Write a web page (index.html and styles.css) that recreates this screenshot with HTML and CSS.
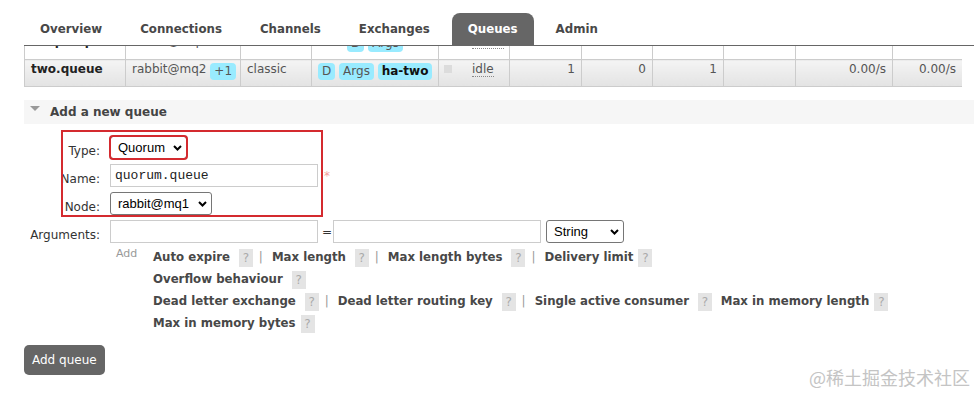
FILE: index.html
```html
<!DOCTYPE html>
<html lang="en">
<head>
<meta charset="utf-8">
<title>Queues</title>
<link rel="stylesheet" href="styles.css">
</head>
<body>
<nav class="tabs">
  <a class="tab">Overview</a>
  <a class="tab">Connections</a>
  <a class="tab">Channels</a>
  <a class="tab">Exchanges</a>
  <a class="tab active">Queues</a>
  <a class="tab">Admin</a>
</nav>

<main class="page">
  <div class="list-wrap">
    <table class="list">
      <colgroup>
        <col class="c1"><col class="c2"><col class="c3"><col class="c4"><col class="c5"><col class="c6">
        <col class="c7"><col class="c8"><col class="c9"><col class="c10"><col class="c11">
      </colgroup>
      <tbody>
        <tr class="r1">
          <td class="name">simple.queue</td>
          <td>rabbit@mq3</td>
          <td>classic</td>
          <td class="center"><abbr class="b">D</abbr> <abbr class="b">Args</abbr></td>
          <td class="state"><span class="sq red"></span><abbr class="st">down</abbr></td>
          <td class="num">NaN</td>
          <td class="num">NaN</td>
          <td class="num">NaN</td>
          <td></td>
          <td></td>
          <td></td>
        </tr>
        <tr class="r2">
          <td class="name">two.queue</td>
          <td>rabbit@mq2 <abbr class="b">+1</abbr></td>
          <td>classic</td>
          <td class="center"><abbr class="b">D</abbr> <abbr class="b">Args</abbr> <abbr class="b strong">ha-two</abbr></td>
          <td class="state"><span class="sq"></span><abbr class="st">idle</abbr></td>
          <td class="num">1</td>
          <td class="num">0</td>
          <td class="num">1</td>
          <td></td>
          <td class="num">0.00/s</td>
          <td class="num">0.00/s</td>
        </tr>
      </tbody>
    </table>
  </div>

  <h2 class="sec-title"><span class="tri"></span>Add a new queue</h2>

  <div class="form">
    <div class="grid">
      <label class="lbl">Type:</label>
      <div class="ctl">
        <span class="sel hl"><select class="w-type"><option>Quorum</option></select><svg class="chev" viewBox="0 0 9 6"><path d="M1 1 L4.5 4.5 L8 1" fill="none" stroke="#000" stroke-width="2"/></svg></span>
      </div>

      <label class="lbl">Name:</label>
      <div class="ctl">
        <input class="txt" type="text" value="quorum.queue"><span class="mand">*</span>
      </div>

      <label class="lbl">Node:</label>
      <div class="ctl">
        <span class="sel"><select class="w-node"><option>rabbit@mq1</option></select><svg class="chev" viewBox="0 0 9 6"><path d="M1 1 L4.5 4.5 L8 1" fill="none" stroke="#000" stroke-width="2"/></svg></span>
      </div>

      <label class="lbl">Arguments:</label>
      <div class="ctl">
        <input class="txt" type="text"><span class="eq">=</span><input class="txt" type="text">
        <span class="sel str"><select class="w-str"><option>String</option></select><svg class="chev" viewBox="0 0 9 6"><path d="M1 1 L4.5 4.5 L8 1" fill="none" stroke="#000" stroke-width="2"/></svg></span>
      </div>

      <div class="arg-help">
        <span class="add">Add</span>
        <div class="lines">
          <div class="ln"><a>Auto expire</a> <span class="q">?</span><span class="sep">|</span><a>Max length</a> <span class="q">?</span><span class="sep">|</span><a>Max length bytes</a> <span class="q">?</span><span class="sep">|</span><a>Delivery limit</a><span class="q">?</span></div>
          <div class="ln"><a>Overflow behaviour</a> <span class="q">?</span></div>
          <div class="ln"><a>Dead letter exchange</a> <span class="q">?</span><span class="sep">|</span><a>Dead letter routing key</a> <span class="q">?</span><span class="sep">|</span><a>Single active consumer</a> <span class="q">?</span> <a class="ml">Max in memory length</a><span class="q">?</span></div>
          <div class="ln"><a>Max in memory bytes</a><span class="q">?</span></div>
        </div>
      </div>
    </div>
    <div class="annot"></div>
  </div>

  <button class="btn" type="button">Add queue</button>
</main>

<div class="wm">@稀土掘金技术社区</div>
</body>
</html>
```

FILE: styles.css
```css
* { box-sizing: border-box; }

html, body {
  margin: 0;
  padding: 0;
  background: #fff;
}

body {
  position: relative;
  height: 394px;
  overflow: hidden;
  font-family: "DejaVu Sans", Verdana, sans-serif;
  font-size: 12px;
  color: #484848;
}

/* ---------- tabs ---------- */
.tabs {
  display: flex;
  gap: 6px;
  margin-left: 24px;
  padding-top: 13px;
  border-bottom: 1px solid #666;
}

.tab {
  height: 32px;
  line-height: 32px;
  padding: 0 16px;
  font-size: 11.8px;
  font-weight: bold;
  color: #484848;
  border-radius: 8px 8px 0 0;
}

.tab.active {
  background: #666;
  color: #fff;
}

/* ---------- page ---------- */
.page {
  padding-left: 24px;
}

.list-wrap {
  width: 938px;
  height: 41px;
  overflow: hidden;
}

.list {
  width: 938px;
  margin-top: -15px;
  border-collapse: collapse;
  table-layout: fixed;
}

.c1 { width: 101px; }
.c2 { width: 115px; }
.c3 { width: 71px; }
.c4 { width: 127px; }
.c5 { width: 71px; }
.c6 { width: 72px; }
.c7 { width: 71px; }
.c8 { width: 71px; }
.c9 { width: 72px; }
.c10 { width: 97px; }
.c11 { width: 70px; }

.list td {
  height: 27px;
  padding: 0 6px;
  border: 1px solid #ccc;
  line-height: 19px;
  vertical-align: top;
  white-space: nowrap;
  overflow: hidden;
  color: #555;
  background: #fff;
}

.list .r1 td {
  height: 28px;
}

.list .r2 td {
  background: linear-gradient(#f4f4f4, #e3e3e3);
}

.list td.name {
  font-weight: bold;
  color: #222;
}

.list td.center { text-align: center; }
.list td.num { text-align: right; }
.list td.state { padding-left: 5px; }

.b {
  display: inline-block;
  height: 17px;
  line-height: 17px;
  padding: 0 4px;
  border-radius: 4px;
  background: #99ebff;
  color: #555;
  vertical-align: -2px;
  text-decoration: none;
}

.b.strong {
  font-weight: bold;
  color: #111;
}

.sq {
  display: inline-block;
  width: 8px;
  height: 8px;
  margin-right: 20px;
  background: #dcdcdc;
}

.sq.red { background: #f07c7c; }

.st {
  text-decoration: none;
  border-bottom: 1px dotted #888;
  color: #555;
}

/* ---------- section ---------- */
.sec-title {
  margin: 13px 0 0;
  height: 24px;
  padding: 1px 0 0 6px;
  line-height: 23px;
  font-size: 12px;
  font-weight: bold;
  color: #444;
  background: #f6f6f6;
}

.tri {
  display: inline-block;
  width: 0;
  height: 0;
  margin-right: 10px;
  border-left: 5px solid transparent;
  border-right: 5px solid transparent;
  border-top: 5px solid #999;
  vertical-align: 5px;
}

.form {
  position: relative;
  padding-top: 12px;
}

.grid {
  display: grid;
  grid-template-columns: 76px 1fr;
  column-gap: 10px;
  row-gap: 5px;
}

.lbl {
  justify-self: end;
  align-self: end;
  margin-bottom: 1px;
  line-height: 14px;
  color: #333;
}

.ctl {
  display: flex;
  align-items: center;
  height: 23px;
}

.txt {
  width: 208px;
  height: 23px;
  padding: 0 4px;
  border: 1px solid #ccc;
  border-radius: 0;
  background: #fff;
  font: 13px "Liberation Mono", "Courier New", monospace;
  color: #222;
  outline: none;
}

.mand {
  margin-left: 6px;
  color: #f2a0a0;
  font-size: 12px;
}

.eq {
  margin: 0 1px 0 4px;
  color: #333;
}

.sel {
  display: inline-flex;
  align-items: center;
}

.sel.str { margin-left: 5px; }

.sel select {
  -webkit-appearance: none;
  appearance: none;
  height: 23px;
  padding: 0 18px 0 7px;
  border: 1px solid #767676;
  border-radius: 3px;
  background: #fff;
  font: 13px "Liberation Sans", Arial, sans-serif;
  color: #000;
}

.sel.hl select {
  outline: 2px solid #d42a2f;
  outline-offset: -1px;
}

.w-type { width: 77px; }
.w-node { width: 102px; }
.w-str { width: 78px; }

.chev {
  width: 9px;
  height: 6px;
  margin-left: -14px;
  pointer-events: none;
}

.arg-help {
  grid-column: 2;
  display: flex;
  margin-top: -2px;
}

.add {
  width: 43px;
  padding-left: 6px;
  font-size: 11px;
  line-height: 16px;
  color: #999;
}

.ln {
  line-height: 22px;
  white-space: nowrap;
}

.ln a {
  font-size: 11.75px;
  font-weight: bold;
  color: #484848;
  text-decoration: none;
}

.ln a.ml { margin-left: 5px; }

.q {
  display: inline-block;
  width: 14px;
  height: 18px;
  margin-left: 5px;
  line-height: 18px;
  text-align: center;
  background: #e4e4e4;
  color: #aaa;
  vertical-align: middle;
}

.sep {
  margin: 0 9px 0 6px;
  color: #999;
}

.annot {
  position: absolute;
  left: 37px;
  top: 6px;
  width: 262px;
  height: 87px;
  border: 2px solid #d42a2f;
  pointer-events: none;
}

.btn {
  display: block;
  margin-top: 11px;
  height: 30px;
  padding: 0 8px;
  border: 0;
  border-radius: 5px;
  background: #666;
  color: #fff;
  font: 12px/30px "DejaVu Sans", Verdana, sans-serif;
}

.wm {
  position: absolute;
  right: 4px;
  top: 364px;
  font: 18px/26px "Noto Sans CJK SC", sans-serif;
  color: #c4c4c4;
}
```
